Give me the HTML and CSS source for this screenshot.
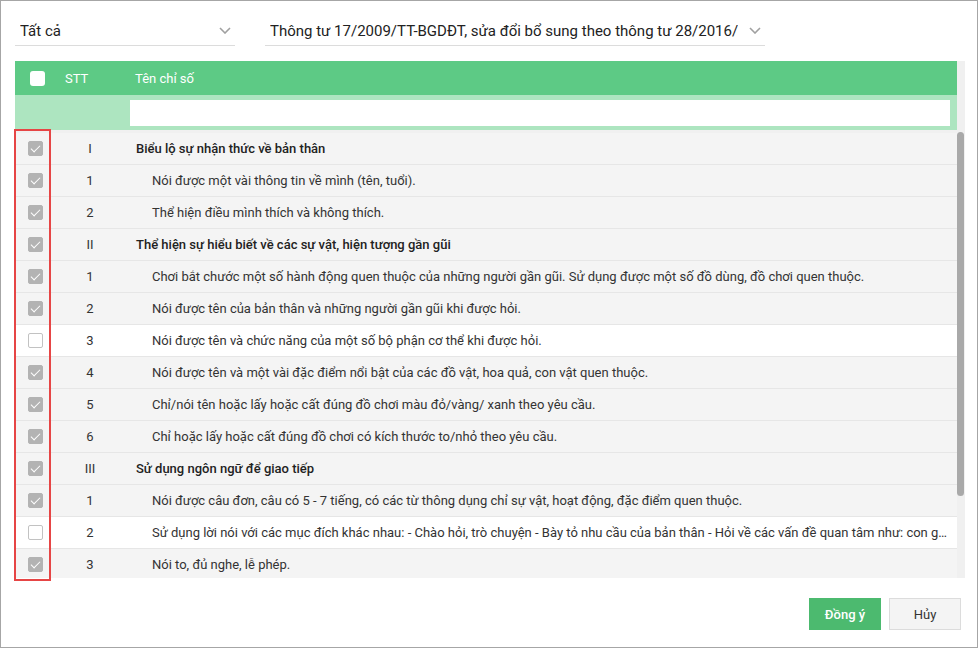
FILE: index.html
```html
<!DOCTYPE html>
<html lang="vi">
<head>
<meta charset="utf-8">
<title>Chọn chỉ số</title>
<link rel="stylesheet" href="styles.css">
</head>
<body>
<div class="window">
  <div class="filters">
    <div class="select select-1">
      <span class="select-text">Tất cả</span>
      <svg class="chev" width="12" height="7" viewBox="0 0 12 7"><path d="M1 1l5 5 5-5" fill="none" stroke="#a0a0a0" stroke-width="1.6"/></svg>
    </div>
    <div class="select select-2">
      <span class="select-text">Thông tư 17/2009/TT-BGDĐT, sửa đổi bổ sung theo thông tư 28/2016/</span>
      <svg class="chev" width="12" height="7" viewBox="0 0 12 7"><path d="M1 1l5 5 5-5" fill="none" stroke="#a0a0a0" stroke-width="1.6"/></svg>
    </div>
  </div>

  <div class="grid">
    <div class="grid-main">
      <div class="grid-head">
        <div class="c-check"><span class="cb cb-head"></span></div>
        <div class="c-stt head-stt">STT</div>
        <div class="c-name head-name">Tên chỉ số</div>
      </div>
      <div class="grid-filter">
        <input class="filter-input" type="text">
      </div>
      <div class="grid-body">
        <div class="row sel group"><div class="c-check"><span class="cb on"></span></div><div class="c-stt">I</div><div class="c-name">Biểu lộ sự nhận thức về bản thân</div></div>
        <div class="row sel"><div class="c-check"><span class="cb on"></span></div><div class="c-stt">1</div><div class="c-name">Nói được một vài thông tin về mình (tên, tuổi).</div></div>
        <div class="row sel"><div class="c-check"><span class="cb on"></span></div><div class="c-stt">2</div><div class="c-name">Thể hiện điều mình thích và không thích.</div></div>
        <div class="row sel group"><div class="c-check"><span class="cb on"></span></div><div class="c-stt">II</div><div class="c-name">Thể hiện sự hiểu biết về các sự vật, hiện tượng gần gũi</div></div>
        <div class="row sel"><div class="c-check"><span class="cb on"></span></div><div class="c-stt">1</div><div class="c-name">Chơi bắt chước một số hành động quen thuộc của những người gần gũi. Sử dụng được một số đồ dùng, đồ chơi quen thuộc.</div></div>
        <div class="row sel"><div class="c-check"><span class="cb on"></span></div><div class="c-stt">2</div><div class="c-name">Nói được tên của bản thân và những người gần gũi khi được hỏi.</div></div>
        <div class="row"><div class="c-check"><span class="cb"></span></div><div class="c-stt">3</div><div class="c-name">Nói được tên và chức năng của một số bộ phận cơ thể khi được hỏi.</div></div>
        <div class="row sel"><div class="c-check"><span class="cb on"></span></div><div class="c-stt">4</div><div class="c-name">Nói được tên và một vài đặc điểm nổi bật của các đồ vật, hoa quả, con vật quen thuộc.</div></div>
        <div class="row sel"><div class="c-check"><span class="cb on"></span></div><div class="c-stt">5</div><div class="c-name">Chỉ/nói tên hoặc lấy hoặc cất đúng đồ chơi màu đỏ/vàng/ xanh theo yêu cầu.</div></div>
        <div class="row sel"><div class="c-check"><span class="cb on"></span></div><div class="c-stt">6</div><div class="c-name">Chỉ hoặc lấy hoặc cất đúng đồ chơi có kích thước to/nhỏ theo yêu cầu.</div></div>
        <div class="row sel group"><div class="c-check"><span class="cb on"></span></div><div class="c-stt">III</div><div class="c-name">Sử dụng ngôn ngữ để giao tiếp</div></div>
        <div class="row sel"><div class="c-check"><span class="cb on"></span></div><div class="c-stt">1</div><div class="c-name">Nói được câu đơn, câu có 5 - 7 tiếng, có các từ thông dụng chỉ sự vật, hoạt động, đặc điểm quen thuộc.</div></div>
        <div class="row"><div class="c-check"><span class="cb"></span></div><div class="c-stt">2</div><div class="c-name">Sử dụng lời nói với các mục đích khác nhau: - Chào hỏi, trò chuyện - Bày tỏ nhu cầu của bản thân - Hỏi về các vấn đề quan tâm như: con g...</div></div>
        <div class="row sel"><div class="c-check"><span class="cb on"></span></div><div class="c-stt">3</div><div class="c-name">Nói to, đủ nghe, lễ phép.</div></div>
      </div>
    </div>
    <div class="vscroll"><div class="thumb"></div></div>
  </div>

  <div class="footer">
    <button class="btn btn-ok">Đồng ý</button>
    <button class="btn btn-cancel">Hủy</button>
  </div>

  <div class="highlight"></div>
</div>
</body>
</html>
```

FILE: styles.css
```css
html, body {
  margin: 0;
  padding: 0;
  background: #fff;
}

body {
  font-family: Roboto, "Noto Sans", "Liberation Sans", sans-serif;
  color: #333;
}

.window {
  position: relative;
  width: 978px;
  height: 648px;
  box-sizing: border-box;
  border: 1px solid #a6a6a6;
  background: #fff;
}

/* filters */
.filters {
  display: flex;
  gap: 30px;
  padding: 15px 0 0 14px;
}

.select {
  display: flex;
  align-items: center;
  justify-content: space-between;
  height: 30px;
  box-sizing: border-box;
  border-bottom: 1px solid #dcdcdc;
  padding: 0 4px 0 5px;
}

.select-1 { width: 220px; }
.select-2 { width: 500px; }

.select-text {
  font-size: 15px;
  color: #222;
  white-space: nowrap;
  overflow: hidden;
}

.chev {
  flex: none;
  margin-left: 6px;
}

/* grid */
.grid {
  display: flex;
  margin: 15px 0 0 14px;
  width: 950px;
}

.grid-main {
  flex: 1;
  min-width: 0;
}

.vscroll {
  width: 8px;
  background: #f0f0f0;
}

.thumb {
  margin-top: 71px;
  width: 7px;
  height: 364px;
  border-radius: 4px;
  background: #a9a9a9;
}

.grid-head,
.row {
  display: grid;
  grid-template-columns: 40px 70px 1fr;
  align-items: center;
}

.grid-head {
  height: 34px;
  background: #5dca85;
  color: #fff;
  font-size: 13px;
}

.head-stt {
  text-align: left;
  padding-left: 10px;
}

.head-name {
  padding-left: 10px;
}

.grid-filter {
  height: 38px;
  box-sizing: border-box;
  background: #ade5c0;
  border-bottom: 3px solid #f0f0f0;
  padding: 5px 7px 0 115px;
}

.filter-input {
  display: block;
  width: 100%;
  height: 26px;
  box-sizing: border-box;
  border: 0;
  background: #fff;
  outline: none;
  margin: 0;
  padding: 0 6px;
}

.grid-body {
  height: 445px;
  overflow: hidden;
  background: #f4f4f4;
}

.row {
  height: 32px;
  box-sizing: border-box;
  border-bottom: 1px solid #e6e6e6;
  background: #fff;
  font-size: 13px;
  color: #333;
}

.row.sel {
  background: #f4f4f4;
  border-left: 1px solid #5dca85;
  grid-template-columns: 39px 70px 1fr;
}

.c-check {
  display: flex;
  justify-content: center;
  align-items: center;
}

.row .c-stt {
  text-align: center;
}

.c-name {
  white-space: nowrap;
  overflow: hidden;
  text-overflow: ellipsis;
  padding-right: 9px;
}

.row .c-name {
  padding-left: 27px;
}

.row.group .c-name {
  padding-left: 11px;
  font-weight: 500;
  color: #222;
}

/* checkboxes */
.cb {
  position: relative;
  display: block;
  width: 15px;
  height: 15px;
  box-sizing: border-box;
  border: 1px solid #c2c2c2;
  border-radius: 2px;
  background: #fff;
}

.cb.on {
  border-color: #b3b3b3;
  background: #b3b3b3;
}

.cb.on::after {
  content: "";
  position: absolute;
  left: 4px;
  top: 1px;
  width: 4px;
  height: 8px;
  border: solid #fff;
  border-width: 0 1.5px 1.5px 0;
  transform: rotate(45deg);
}

.cb-head {
  border: 0;
  border-radius: 3px;
  margin-left: 4px;
}

/* footer */
.footer {
  display: flex;
  justify-content: flex-end;
  gap: 8px;
  margin-top: 20px;
  padding-right: 16px;
}

.btn {
  width: 72px;
  height: 32px;
  box-sizing: border-box;
  font-family: Roboto, "Noto Sans", "Liberation Sans", sans-serif;
  font-size: 13px;
  border-radius: 0;
  cursor: pointer;
  padding: 0;
}

.btn-ok {
  background: #4cba6f;
  border: 1px solid #4cba6f;
  color: #fff;
  font-weight: 500;
}

.btn-cancel {
  background: #f4f4f4;
  border: 1px solid #dcdcdc;
  color: #333;
}

/* annotation overlay */
.highlight {
  position: absolute;
  left: 13px;
  top: 128px;
  width: 37px;
  height: 452px;
  box-sizing: border-box;
  border: 2px solid #e64545;
  pointer-events: none;
}
```
